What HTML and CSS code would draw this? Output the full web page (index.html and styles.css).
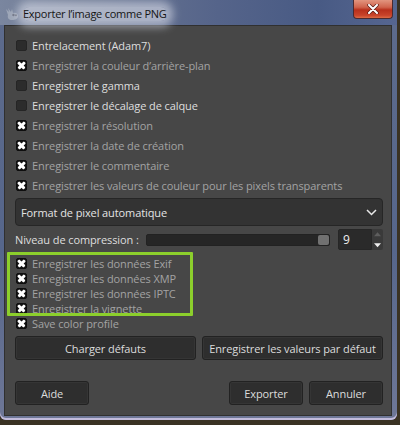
FILE: index.html
```html
<!DOCTYPE html>
<html lang="fr">
<head>
<meta charset="utf-8">
<title>Exporter l’image comme PNG</title>
<link rel="stylesheet" href="styles.css">
</head>
<body>
<div class="window">
  <div class="titlebar">
    <svg class="app-icon" width="15" height="14" viewBox="0 0 15 14">
      <path d="M1 2 L4 5 L3 1 L6 5 L7 2 L8 6 C11 5 13 7 13 9 C13 12 10 13 7 13 C4 13 2 11 3 8 Z" fill="#aab1c0" opacity="0.75"/>
      <circle cx="8.5" cy="8" r="1.2" fill="#6a7080"/>
      <circle cx="11" cy="8.2" r="1" fill="#6a7080"/>
    </svg>
    <span class="title">Exporter l’image comme PNG</span>
    <div class="close">
      <svg width="12" height="10" viewBox="0 0 12 10">
        <path d="M2 1 L10 9 M10 1 L2 9" stroke="#5a1a14" stroke-width="3.4" stroke-linecap="round"/>
        <path d="M2 1 L10 9 M10 1 L2 9" stroke="#ffffff" stroke-width="2" stroke-linecap="round"/>
      </svg>
    </div>
  </div>
  <div class="client">
    <div class="opts">
      <div class="row"><span class="cb"></span><span class="lbl">Entrelacement (Adam7)</span></div>
      <div class="row off"><span class="cb on"></span><span class="lbl">Enregistrer la couleur d’arrière-plan</span></div>
      <div class="row"><span class="cb"></span><span class="lbl">Enregistrer le gamma</span></div>
      <div class="row"><span class="cb"></span><span class="lbl">Enregistrer le décalage de calque</span></div>
      <div class="row off"><span class="cb on"></span><span class="lbl">Enregistrer la résolution</span></div>
      <div class="row off"><span class="cb on"></span><span class="lbl">Enregistrer la date de création</span></div>
      <div class="row off"><span class="cb on"></span><span class="lbl">Enregistrer le commentaire</span></div>
      <div class="row off"><span class="cb on"></span><span class="lbl">Enregistrer les valeurs de couleur pour les pixels transparents</span></div>
    </div>

    <div class="combo">
      <span class="combo-text">Format de pixel automatique</span>
      <svg class="chev" width="11" height="7" viewBox="0 0 11 7">
        <polyline points="1,1 5.5,5.5 10,1" fill="none" stroke="#e8e8e8" stroke-width="1.5"/>
      </svg>
    </div>

    <div class="comp-row">
      <span class="comp-label">Niveau de compression :</span>
      <div class="slider"><span class="handle"></span></div>
      <div class="spin">
        <span class="spin-val">9</span>
        <div class="spin-btns">
          <svg width="11" height="10" viewBox="0 0 11 10"><polygon points="2,7 9,7 5.5,3" fill="#5e5e5e"/></svg>
          <svg width="11" height="10" viewBox="0 0 11 10"><polygon points="2,3 9,3 5.5,7" fill="#f0f0f0"/></svg>
        </div>
      </div>
    </div>

    <div class="meta">
      <div class="marked">
        <div class="row tight off"><span class="cb on"></span><span class="lbl">Enregistrer les données Exif</span></div>
        <div class="row tight off"><span class="cb on"></span><span class="lbl">Enregistrer les données XMP</span></div>
        <div class="row tight off"><span class="cb on"></span><span class="lbl">Enregistrer les données IPTC</span></div>
        <div class="row tight off"><span class="cb on"></span><span class="lbl">Enregistrer la vignette</span></div>
      </div>
      <div class="row tight off"><span class="cb on"></span><span class="lbl">Save color profile</span></div>
    </div>

    <div class="btn-pair">
      <div class="btn">Charger défauts</div>
      <div class="btn">Enregistrer les valeurs par défaut</div>
    </div>

    <div class="footer">
      <div class="btn small">Aide</div>
      <div class="footer-right">
        <div class="btn small">Exporter</div>
        <div class="btn small">Annuler</div>
      </div>
    </div>
  </div>
</div>
</body>
</html>
```

FILE: styles.css
```css
html, body {
  margin: 0;
  padding: 0;
}

body {
  width: 400px;
  height: 425px;
  overflow: hidden;
  background: #3a3223;
  font-family: "Open Sans", "Noto Sans", sans-serif;
  font-size: 11px;
  letter-spacing: -0.1px;
}

.window {
  width: 397px;
  height: 420px;
  box-sizing: border-box;
  display: flex;
  flex-direction: column;
  padding-bottom: 4px;
  border-radius: 0 0 6px 6px;
  background: linear-gradient(180deg, #5d6b8c 0%, #56668b 60%, #6e7797 100%);
  box-shadow: inset 0 -2px 0 #c2bbdc;
}

.titlebar {
  height: 25px;
  flex: none;
  display: flex;
  align-items: center;
  position: relative;
  background: linear-gradient(90deg, #7a869f 0%, #6c7892 20%, #55648a 55%, #485a84 80%, #566690 100%);
}

.app-icon {
  margin-left: 5px;
  margin-top: 3px;
  flex: none;
}

.title {
  margin-left: 3px;
  margin-top: 2px;
  font-family: "Open Sans", "Noto Sans", sans-serif;
  font-size: 11px;
  letter-spacing: -0.25px;
  color: #151515;
  background: rgba(218, 222, 234, 0.6);
  box-shadow: 0 0 9px 6px rgba(218, 222, 234, 0.6);
  border-radius: 6px;
  line-height: 14px;
}

.close {
  position: absolute;
  right: 4px;
  top: 0;
  width: 40px;
  height: 19px;
  box-sizing: border-box;
  border: 1px solid #4b2a30;
  border-top: none;
  border-radius: 0 0 4px 4px;
  background: linear-gradient(180deg, #e2957f 0%, #d0644d 40%, #b8301c 55%, #c8432a 85%, #dd6a45 100%);
  display: flex;
  align-items: center;
  justify-content: center;
}

.client {
  flex: 1;
  margin: 0 5px 0 4px;
  background: #474747;
  border: 1px solid #303030;
  padding: 9px 8px 10px 10px;
  display: flex;
  flex-direction: column;
}

.row {
  height: 20px;
  display: flex;
  align-items: center;
  gap: 5px;
  color: #dedede;
  white-space: nowrap;
}

.row.tight {
  height: 15px;
}

.row.off {
  color: #a3a3a3;
}

.cb {
  width: 11px;
  height: 11px;
  margin-left: 1px;
  box-sizing: border-box;
  border-radius: 2px;
  background: #2c2c2c;
  border: 1px solid #252525;
  flex: none;
  position: relative;
}

.cb.on {
  background: #141414;
  border-color: #0e0e0e;
}

.cb.on::before,
.cb.on::after {
  content: "";
  position: absolute;
  left: 0px;
  top: 3.3px;
  width: 9px;
  height: 2.5px;
  background: #ffffff;
  border-radius: 1px;
}

.cb.on::before {
  transform: rotate(45deg);
}

.cb.on::after {
  transform: rotate(-45deg);
}

.combo {
  margin-top: 3px;
  height: 28px;
  box-sizing: border-box;
  border: 1px solid #262626;
  border-radius: 4px;
  background: #333333;
  display: flex;
  align-items: center;
  justify-content: space-between;
  padding: 0 5px 0 5px;
  color: #e4e4e4;
}

.comp-row {
  margin-top: 3px;
  height: 21px;
  display: flex;
  align-items: center;
  color: #dedede;
}

.comp-label {
  white-space: nowrap;
}

.slider {
  flex: 1;
  margin: 0 8px 0 7px;
  height: 12px;
  box-sizing: border-box;
  background: #262626;
  border: 1px solid #222222;
  border-radius: 2px;
  display: flex;
  justify-content: flex-end;
  align-items: center;
}

.handle {
  width: 11px;
  height: 10px;
  border-radius: 2px;
  background: #717171;
}

.spin {
  width: 45px;
  height: 21px;
  display: flex;
  flex: none;
}

.spin-val {
  flex: 1;
  background: #2a2a2a;
  border: 1px solid #262626;
  border-radius: 2px 0 0 2px;
  color: #ededed;
  padding-left: 4px;
  display: flex;
  align-items: center;
  font-size: 12px;
}

.spin-btns {
  width: 11px;
  display: flex;
  flex-direction: column;
  background: #3a3a3a;
  border-radius: 0 2px 2px 0;
}

.spin-btns svg {
  display: block;
  height: 10.5px;
}

.meta {
  margin-top: 6px;
}

.marked {
  position: relative;
}

.marked::after {
  content: "";
  position: absolute;
  left: -8px;
  top: -4px;
  width: 186px;
  height: 64px;
  box-sizing: border-box;
  border: 3px solid #8ccf2c;
  border-radius: 1px;
  pointer-events: none;
}

.btn {
  height: 24px;
  box-sizing: border-box;
  border: 1px solid #222222;
  border-radius: 3px;
  background: #2e2e2e;
  box-shadow: inset 0 0 0 1px #353535;
  color: #dcdcdc;
  display: flex;
  align-items: center;
  justify-content: center;
  white-space: nowrap;
}

.btn-pair {
  margin-top: 5px;
  display: grid;
  grid-template-columns: 1fr 1fr;
  gap: 6px;
}

.footer {
  margin-top: 21px;
  display: flex;
  justify-content: space-between;
}

.footer-right {
  display: flex;
  gap: 6px;
}

.btn.small {
  width: 74px;
}
```
